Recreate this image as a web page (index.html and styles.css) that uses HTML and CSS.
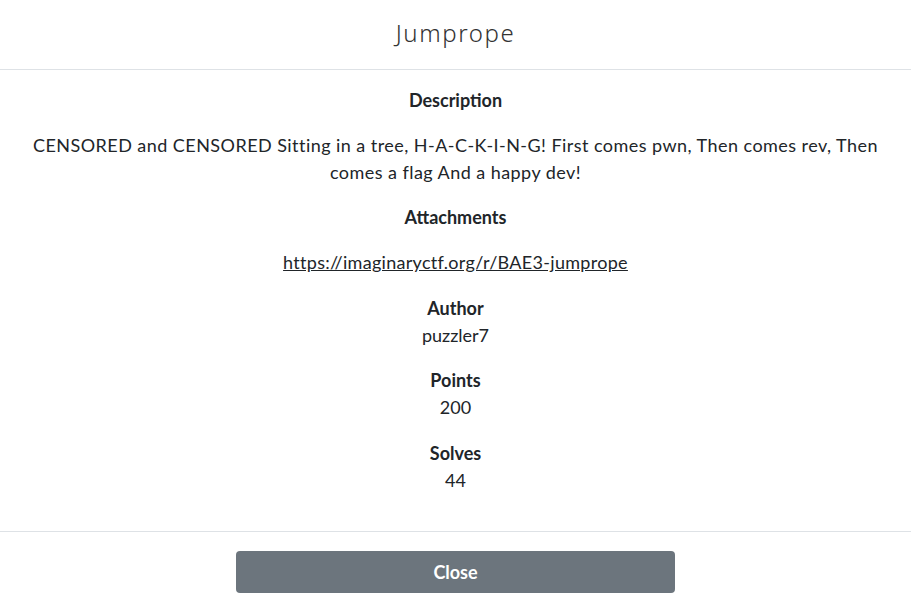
FILE: index.html
```html
<!DOCTYPE html>
<html>
<head>
<meta charset="utf-8">
<link rel="stylesheet" href="styles.css">
</head>
<body>
<div class="modal">
  <header class="modal-header">
    <h1 class="title">Jumprope</h1>
  </header>
  <main class="modal-body">
    <h5 class="label">Description</h5>
    <p class="block desc">CENSORED and CENSORED Sitting in a tree, H-A-C-K-I-N-G! First comes pwn, Then comes rev, Then comes a flag And a happy dev!</p>
    <h5 class="label block">Attachments</h5>
    <p class="block gap"><a class="link" href="#">https://imaginaryctf.org/r/BAE3-jumprope</a></p>
    <div class="field block">
      <h5 class="label">Author</h5>
      <p>puzzler7</p>
    </div>
    <div class="field block gap">
      <h5 class="label">Points</h5>
      <p>200</p>
    </div>
    <div class="field">
      <h5 class="label">Solves</h5>
      <p>44</p>
    </div>
  </main>
  <footer class="modal-footer">
    <button class="btn">Close</button>
  </footer>
</div>
</body>
</html>
```
FILE: styles.css
```css
html, body {
  margin: 0;
  padding: 0;
  background: #fff;
}
body {
  font-family: "Lato", "Open Sans", sans-serif;
  color: #212529;
}
.modal {
  display: flex;
  flex-direction: column;
  width: 911px;
}
.modal-header {
  height: 69px;
  border-bottom: 1px solid #dee2e6;
  display: flex;
  align-items: center;
  justify-content: center;
}
.title {
  margin: 0;
  font-family: "Noto Sans", sans-serif;
  font-weight: 300;
  font-size: 24px;
  letter-spacing: 1.6px;
  color: #333;
  padding-bottom: 5px;
}
.modal-body {
  padding: 17px 16px 37px;
  text-align: center;
  font-size: 18px;
  line-height: 27px;
}
.label {
  margin: 0;
  font-size: 18px;
  font-weight: 700;
  line-height: 27px;
}
p {
  margin: 0;
}
.desc {
  letter-spacing: 0.45px;
}
.modal-body > .label:first-child {
  margin-bottom: 18px;
}
.block {
  margin-bottom: 18px;
}
.gap {
  margin-bottom: 19px;
}
.link {
  color: #212529;
  text-decoration: underline;
  letter-spacing: 0.3px;
}
.modal-footer {
  border-top: 1px solid #dee2e6;
  padding: 19px 0 16px;
  display: flex;
  justify-content: center;
}
.btn {
  width: 439px;
  height: 42px;
  background: #6c757d;
  border: none;
  border-radius: 4px;
  color: #fff;
  font-family: "Lato", sans-serif;
  font-weight: 700;
  font-size: 18px;
}
```
